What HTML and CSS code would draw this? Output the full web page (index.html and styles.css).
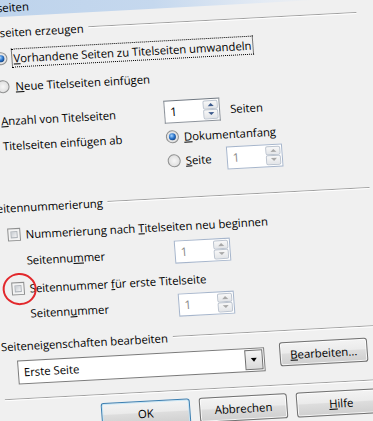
FILE: index.html
```html
<!DOCTYPE html>
<html lang="de">
<head>
    <meta charset="UTF-8">
    <meta name="viewport" content="width=device-width, initial-scale=1.0">
    <title>Titelseiten</title>
    <link rel="stylesheet" href="styles.css">
</head>
<body>
    <div class="window">
        <div class="titlebar"><span class="title">Titelseiten</span></div>

        <div class="client">
            <!-- Titelseiten erzeugen -->
            <div class="group-head"><span>Titelseiten erzeugen</span><span class="line"></span></div>

            <div class="row row-radio1">
                <span class="radio checked"></span>
                <span class="label focus"><u>V</u>orhandene Seiten zu Titelseiten umwandeln</span>
            </div>
            <div class="row row-radio2">
                <span class="radio"></span>
                <span class="label"><u>N</u>eue Titelseiten einfügen</span>
            </div>
            <div class="row field-row row-count">
                <span class="field-label"><u>A</u>nzahl von Titelseiten</span>
                <div class="spin">
                    <span class="value">1</span>
                    <span class="spin-btns"><span class="up"></span><span class="down"></span></span>
                </div>
                <span class="unit">Seiten</span>
            </div>
            <div class="row field-row row-start">
                <span class="field-label">Titelseiten einfügen ab</span>
                <span class="radio checked"></span>
                <span class="opt-label"><u>D</u>okumentanfang</span>
            </div>
            <div class="row field-row row-page">
                <span class="field-label"></span>
                <span class="radio"></span>
                <span class="opt-label page-label"><u>S</u>eite</span>
                <div class="spin disabled">
                    <span class="value">1</span>
                    <span class="spin-btns"><span class="up"></span><span class="down"></span></span>
                </div>
            </div>

            <!-- Seitennummerierung -->
            <div class="group-head head-numbering"><span>Seitennummerierung</span><span class="line"></span></div>

            <div class="row row-check1">
                <span class="check"></span>
                <span class="label">Nummerierung nach <u>T</u>itelseiten neu beginnen</span>
            </div>
            <div class="row sub-row row-num1">
                <span class="sub-label">Seitennu<u>m</u>mer</span>
                <div class="spin disabled">
                    <span class="value">1</span>
                    <span class="spin-btns"><span class="up"></span><span class="down"></span></span>
                </div>
            </div>
            <div class="row row-check2">
                <span class="check marked"><span class="ring"></span></span>
                <span class="label">Seitennummer <u>f</u>ür erste Titelseite</span>
            </div>
            <div class="row sub-row row-num2">
                <span class="sub-label">Seitenn<u>u</u>mmer</span>
                <div class="spin disabled">
                    <span class="value">1</span>
                    <span class="spin-btns"><span class="up"></span><span class="down"></span></span>
                </div>
            </div>

            <!-- Seiteneigenschaften bearbeiten -->
            <div class="group-head head-props"><span>Seiteneigenschaften bearbeiten</span><span class="line"></span></div>

            <div class="row row-props">
                <div class="combo">
                    <span class="value">Erste Seite</span>
                    <span class="arrow"></span>
                </div>
                <button class="btn edit-btn"><span><u>B</u>earbeiten...</span></button>
            </div>

            <div class="separator"></div>

            <div class="buttons">
                <button class="btn default">OK</button>
                <button class="btn">Abbrechen</button>
                <button class="btn"><span><u>H</u>ilfe</span></button>
            </div>
        </div>
    </div>
</body>
</html>
```

FILE: styles.css
```css
body {
    margin: 0;
    background-color: #f0f0f0;
    overflow: hidden;
    font-family: "Open Sans", "Noto Sans", sans-serif;
    font-size: 11.3px;
    line-height: 15px;
    color: #000;
}

u {
    text-decoration: underline;
    text-underline-offset: 1px;
}

/* Fenster, leicht schräg fotografiert */
.window {
    width: 450px;
    height: 480px;
    margin: -20px 0 0 -50px;
    background-color: #f0f0f0;
    transform-origin: 50px 20px;
    transform: matrix(1, -0.054, 0.075, 1, 0, 0);
}

.titlebar {
    height: 37px;
    box-sizing: border-box;
    padding: 21px 0 0 24px;
    line-height: 14px;
    background: linear-gradient(90deg, #bcd2eb 0, #c5d8ee 45%, #e4ebf4 70%, #f0f0f0 82%);
}

.client {
    padding: 5px 46px 0 25px;
}

/* Gruppentitel mit Linie */
.group-head {
    display: flex;
    align-items: center;
    height: 20px;
}

.group-head .line {
    flex: 1;
    margin-left: 5px;
    border-top: 1px solid #a0a0a0;
    border-bottom: 1px solid #fff;
}

.head-numbering { margin-top: 17px; }
.head-props { margin-top: 10px; }

.row {
    display: flex;
    align-items: center;
    height: 20px;
    padding-left: 15px;
}

.row-radio1 { margin-top: 6px; }
.row-radio2 { margin-top: 8px; }
.row-count { margin-top: 12px; height: 24px; }
.row-start { margin-top: 2px; height: 22px; }
.row-page { margin-top: 2px; height: 22px; }
.row-check1 { margin-top: 7px; }
.row-num1 { margin-top: 4px; height: 24px; }
.row-check2 { margin-top: 6px; }
.row-num2 { margin-top: 3px; height: 24px; }

.row-props {
    align-items: flex-start;
    height: 28px;
    margin-top: 1px;
    gap: 15px;
}

.label {
    margin-left: 6px;
}

.row-check1 .label,
.row-check2 .label {
    margin-left: 5px;
}

.focus {
    margin-left: 4px;
    padding: 1px;
    border: 1px dotted #000;
}

.field-row {
    padding-left: 17px;
}

.field-label {
    width: 163px;
    flex: none;
}

.sub-row {
    padding-left: 32px;
}

.sub-label {
    width: 148px;
    flex: none;
}

.unit {
    margin-left: 10px;
}

.opt-label {
    margin-left: 5px;
}

.page-label {
    width: 41px;
}

/* Optionsfeld */
.radio {
    flex: none;
    display: flex;
    align-items: center;
    justify-content: center;
    width: 13px;
    height: 13px;
    box-sizing: border-box;
    border: 1px solid #8e8f8f;
    border-radius: 50%;
    background: radial-gradient(circle, #f7f7f7 0, #e2e2e2 65%, #cdcdcd 100%);
}

.radio.checked::after {
    content: "";
    width: 7px;
    height: 7px;
    border-radius: 50%;
    background: radial-gradient(circle at 40% 35%, #a8d6ff 0, #2b74ca 45%, #0c3670 85%);
}

/* Markierfeld */
.check {
    flex: none;
    width: 13px;
    height: 13px;
    box-sizing: border-box;
    padding: 2px;
    border: 1px solid #8e8f8f;
    background-color: #f4f4f4;
}

.check::after {
    content: "";
    display: block;
    width: 100%;
    height: 100%;
    box-sizing: border-box;
    border: 1px solid #aeb3b9;
    background: linear-gradient(135deg, #c9cdd3, #f4f4f4);
}

.check.marked {
    position: relative;
}

.ring {
    position: absolute;
    left: -10px;
    top: -10px;
    width: 34px;
    height: 32px;
    box-sizing: border-box;
    border: 2px solid #e2282c;
    border-radius: 50%;
}

/* Drehfeld */
.spin {
    flex: none;
    display: flex;
    width: 56px;
    height: 23px;
    box-sizing: border-box;
    border: 1px solid #8d939b;
    border-top-color: #6f7780;
    background-color: #fff;
}

.spin.disabled {
    border-color: #a6b5cb;
}

.spin .value {
    flex: 1;
    padding-left: 5px;
    line-height: 21px;
    font-size: 12px;
}

.spin.disabled .value {
    color: #8a8a8a;
}

.spin-btns {
    display: flex;
    flex-direction: column;
    width: 15px;
    padding: 1px 1px 1px 0;
}

.spin-btns span {
    flex: 1;
    display: flex;
    align-items: center;
    justify-content: center;
    border: 1px solid #bcc4cf;
    border-radius: 2px;
    background: linear-gradient(#f8f8f8, #e3e5e8);
}

.spin-btns .up::before {
    content: "";
    border-left: 3px solid transparent;
    border-right: 3px solid transparent;
    border-bottom: 3px solid #3c5a8c;
}

.spin-btns .down::before {
    content: "";
    border-left: 3px solid transparent;
    border-right: 3px solid transparent;
    border-top: 3px solid #3c5a8c;
}

.spin.disabled .up::before { border-bottom-color: #a8a8a8; }
.spin.disabled .down::before { border-top-color: #a8a8a8; }

/* Listenfeld */
.combo {
    flex: none;
    display: flex;
    width: 247px;
    height: 24px;
    margin-top: 4px;
    box-sizing: border-box;
    border: 1px solid #7a7a7a;
    background-color: #fff;
}

.combo .value {
    flex: 1;
    padding-left: 5px;
    line-height: 22px;
}

.combo .arrow {
    display: flex;
    align-items: center;
    justify-content: center;
    width: 16px;
    margin: 1px;
    border: 1px solid #6d6d6d;
    background: linear-gradient(#f5f5f5, #dadada);
}

.combo .arrow::before {
    content: "";
    border-left: 3.5px solid transparent;
    border-right: 3.5px solid transparent;
    border-top: 4px solid #000;
}

/* Schaltflächen */
.btn {
    display: flex;
    align-items: center;
    justify-content: center;
    width: 90px;
    height: 25px;
    box-sizing: border-box;
    padding: 0;
    border: 1px solid #707070;
    border-radius: 3px;
    background: linear-gradient(#f3f3f3 0, #ebebeb 45%, #dddddd 50%, #cfcfcf 100%);
    box-shadow: inset 0 0 0 1px rgba(255, 255, 255, 0.8);
    font: inherit;
    color: #000;
}

.btn.default {
    border-color: #3c7fb1;
    box-shadow: inset 0 0 0 1px #c4e5f6;
}

.edit-btn {
    width: 88px;
    height: 24px;
}

.separator {
    margin: 14px -46px 0 0;
    border-top: 1px solid #a0a0a0;
    border-bottom: 1px solid #fff;
}

.buttons {
    display: flex;
    gap: 9px;
    margin-top: 7px;
    padding-left: 95px;
}
```
